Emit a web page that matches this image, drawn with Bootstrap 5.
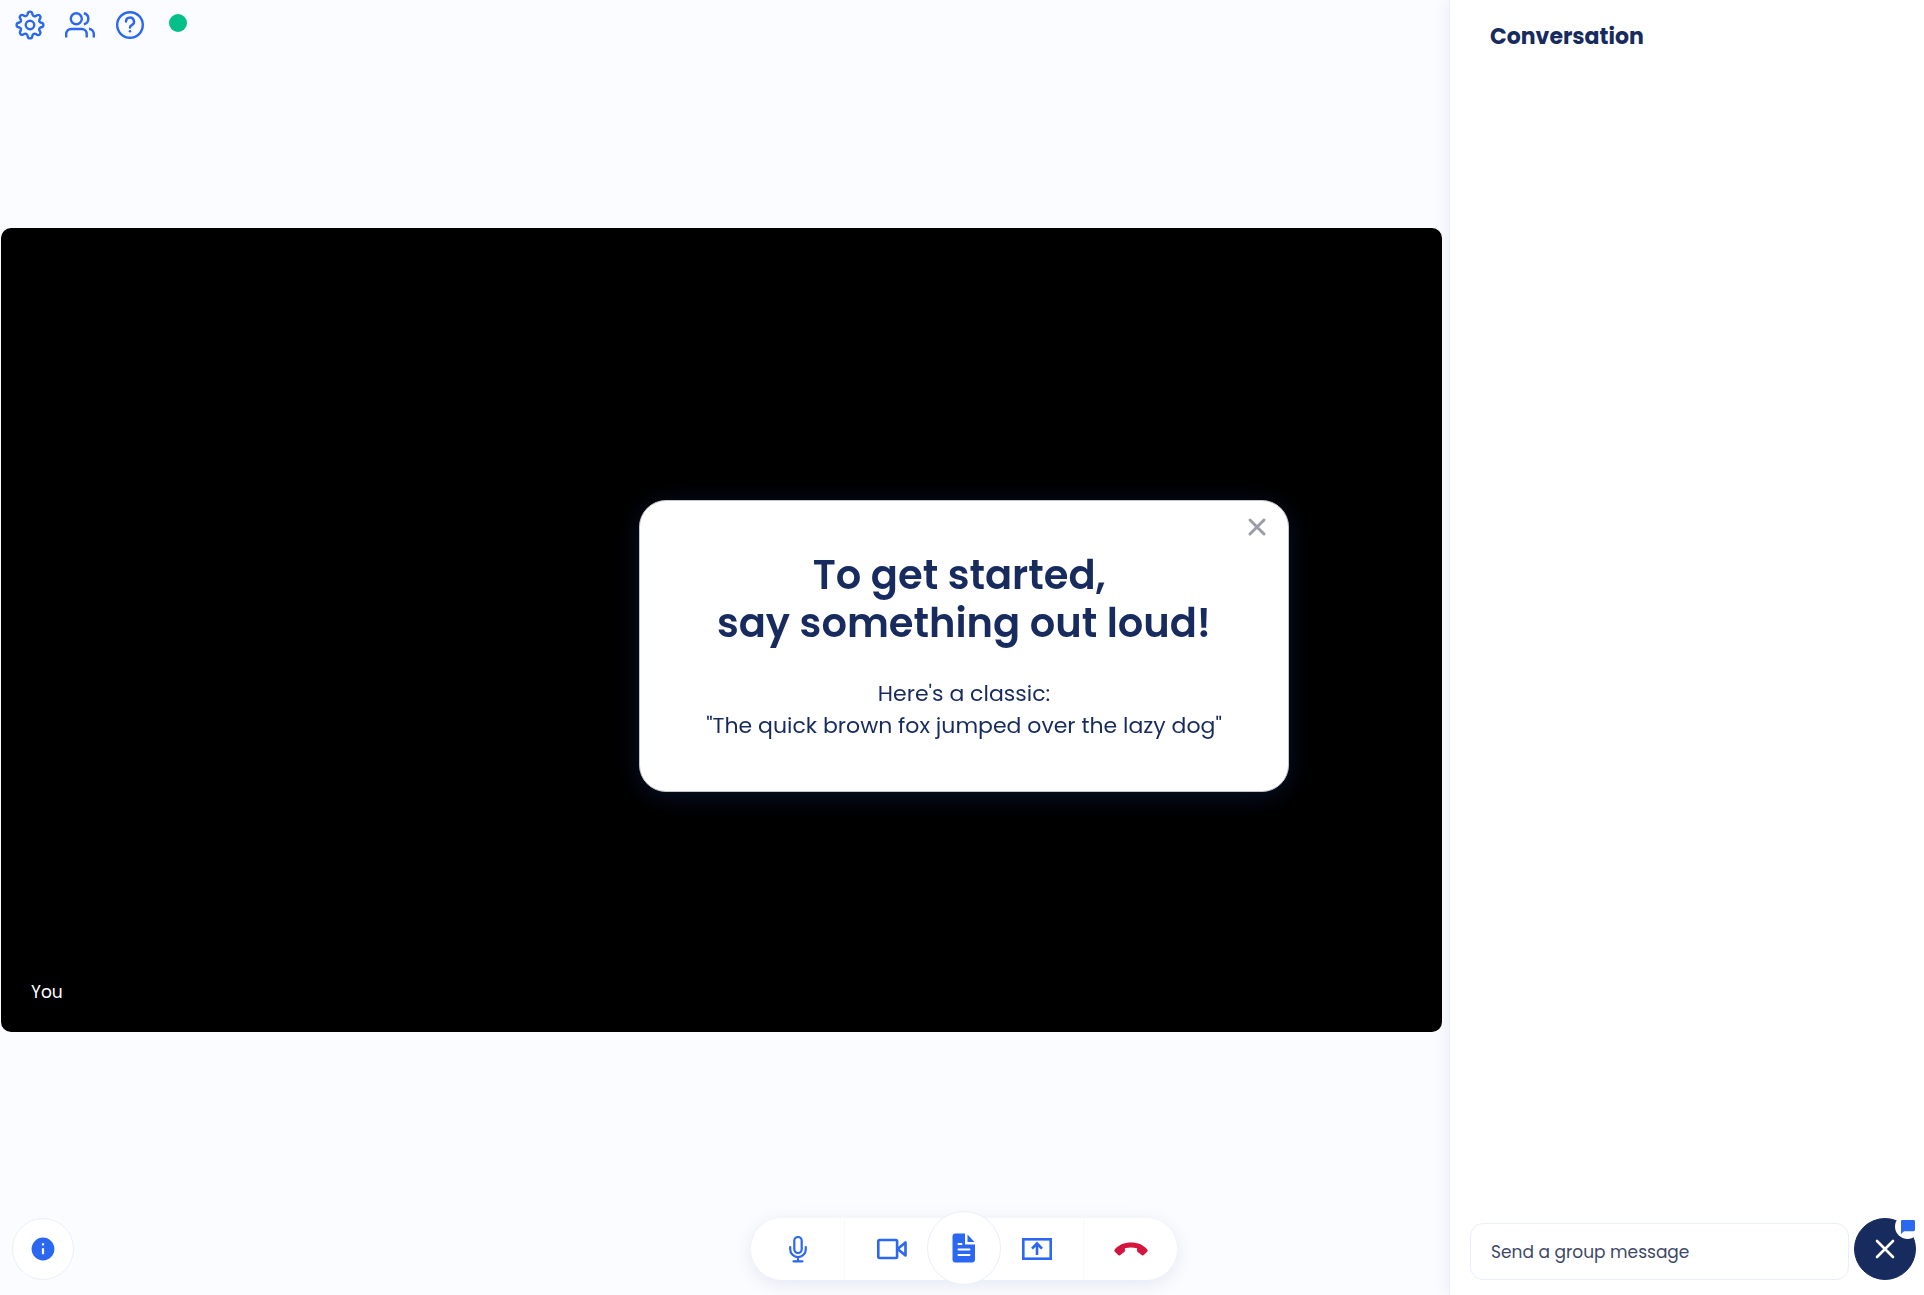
<!DOCTYPE html>
<html lang="en">
<head>
<meta charset="utf-8">
<meta name="viewport" content="width=device-width, initial-scale=1">
<title>Conversation</title>
<link rel="stylesheet" href="https://cdn.jsdelivr.net/npm/bootstrap@5.3.0/dist/css/bootstrap.min.css">
<style>
  :root { --ink: #172b5f; --accent: #2b67f0; --hairline: #e8effa; }
  body { font-family: Poppins, Inter, "Liberation Sans", sans-serif; color: var(--ink); background: #fbfcff; }
  svg { display: block; }
  .bare-btn { color: var(--accent); background: none; border: 0; padding: 0; }
  .topbar { height: 49px; padding: 10px 15px 9px; gap: 20px; }
  .status-dot { width: 18px; height: 18px; margin: 4px; background: #04bf8a; }
  .stage { padding: 0 7px 84px 1px; }
  .video-tile { aspect-ratio: 1441 / 804; border-radius: 10px; padding: 28px 30px; font-size: 17px; line-height: 24px; }
  .chat-panel { width: 475px; border-left: 1px solid var(--hairline); box-shadow: 0 0 16px rgba(30, 60, 130, .09); }
  .chat-title { font-size: 22px; line-height: 32px; font-weight: 700; padding: 21px 40px; }
  .chat-form { padding: 0 75px 15px 20px; }
  .chat-input { height: 57px; border: 1px solid var(--hairline); border-radius: 13px; padding: 9px 20px; font-size: 17px; line-height: 36px; color: var(--ink); }
  .chat-input::placeholder { color: #3d4967; opacity: 1; }
  .floating-bar { padding: 0 8px 15px 12px; pointer-events: none; }
  .floating-bar > * { pointer-events: auto; }
  .round-btn { width: 62px; height: 62px; border: 1px solid var(--hairline); color: var(--accent); }
  .close-chat { background: var(--ink); border-color: var(--ink); color: #fff; }
  .chat-badge { width: 25px; height: 25px; top: -5px; right: -5px; color: var(--accent); }
  .call-dock { height: 62px; box-shadow: 0 4px 18px rgba(30, 60, 130, .11); }
  .call-btn { width: 93px; }
  .call-btn.edge-start { width: 94px; border-right: 1px solid #f7f9fc; }
  .call-btn.edge-end { width: 94px; border-left: 1px solid #f7f9fc; color: #d5153f; }
  .notes-btn { width: 74px; height: 74px; margin: -7px -11px; border: 1px solid var(--hairline); background: #fff; z-index: 1; }
  .prompt-layer { padding: 0 0 4px 4px; pointer-events: none; }
  .prompt-card { width: 650px; padding: 50px 50px 49px; border: 1px solid #c3c5cb; border-radius: 27px; box-shadow: 0 4px 24px rgba(35, 70, 170, .25); pointer-events: auto; }
  .prompt-title { font-size: 40px; line-height: 48px; font-weight: 600; margin: 0 0 31px; }
  .prompt-text { font-size: 22px; line-height: 32px; }
  .prompt-close { top: 13px; right: 18px; color: #9a9da8; }
</style>
<script src="https://cdn.jsdelivr.net/npm/bootstrap@5.3.0/dist/js/bootstrap.bundle.min.js"></script>
</head>
<body>
<div class="d-flex vh-100 overflow-hidden">
  <main class="d-flex flex-column flex-grow-1">
    <header class="topbar d-flex">
      <button class="bare-btn" type="button" aria-label="Settings">
        <svg width="30" height="30" viewBox="0 0 24 24" fill="none" stroke="currentColor" stroke-width="1.9" stroke-linecap="round" stroke-linejoin="round"><circle cx="12" cy="12" r="3.400"/><path d="M10.200 2.700a1.850 1.850 0 0 1 3.600 0l.2.9a1.850 1.850 0 0 0 2.750 1.150l.8-.5a1.850 1.850 0 0 1 2.550 2.550l-.5.8A1.850 1.850 0 0 0 20.400 10l.9.2a1.850 1.850 0 0 1 0 3.600l-.9.2a1.850 1.850 0 0 0-.8 2.400l.5.8a1.850 1.850 0 0 1-2.550 2.550l-.8-.5A1.850 1.850 0 0 0 14 20.400l-.2.9a1.850 1.850 0 0 1-3.600 0l-.2-.9a1.850 1.850 0 0 0-2.750-1.150l-.8.5A1.850 1.850 0 0 1 4.100 17.200l.5-.8A1.850 1.850 0 0 0 3.600 14l-.9-.2a1.850 1.850 0 0 1 0-3.600l.9-.2a1.850 1.850 0 0 0 1-2.400l-.5-.8A1.850 1.850 0 0 1 6.650 4.250l.8.5A1.850 1.850 0 0 0 10 3.600z"/></svg>
      </button>
      <button class="bare-btn" type="button" aria-label="Participants">
        <svg width="30" height="30" viewBox="0 0 30 30" fill="none" stroke="currentColor" stroke-width="2.4"><circle cx="11.300" cy="8.700" r="5.500"/><path d="M1.200 27.500v-3.500a5 5 0 0 1 5-5h10.500a5 5 0 0 1 5 5v3.500M18.800 3.200a5.600 5.600 0 0 1 0 11M24 18.800a5.500 5.500 0 0 1 4.800 5.500v3.200"/></svg>
      </button>
      <button class="bare-btn" type="button" aria-label="Help">
        <svg width="30" height="30" viewBox="0 0 30 30" fill="none" stroke="currentColor" stroke-width="2.4" stroke-linecap="round"><circle cx="15" cy="15" r="12.800"/><path d="M11 11.500a4 4 0 1 1 5.800 3.600c-1.200.6-1.800 1.200-1.800 2.500"/><circle cx="15" cy="21.300" r="1.300" fill="currentColor" stroke="none"/></svg>
      </button>
      <span class="status-dot rounded-circle" role="status" aria-label="Connected"></span>
    </header>
    <section class="stage flex-grow-1 d-flex align-items-center">
      <div class="video-tile bg-black text-white flex-grow-1 d-flex align-items-end"><span>You</span></div>
    </section>
  </main>
  <aside class="chat-panel bg-white d-flex flex-column flex-shrink-0">
    <h2 class="chat-title m-0">Conversation</h2>
    <div class="flex-grow-1"></div>
    <form class="chat-form">
      <label class="visually-hidden" for="message">Group message</label>
      <input class="chat-input w-100 bg-white" id="message" type="text" placeholder="Send a group message">
    </form>
  </aside>
</div>

<div class="floating-bar fixed-bottom d-flex justify-content-between align-items-end">
  <button class="round-btn rounded-circle bg-white p-0 d-flex align-items-center justify-content-center" type="button" aria-label="Call information">
    <svg width="24" height="24" viewBox="0 0 24 24"><circle cx="12" cy="12" r="11.400" fill="currentColor"/><path d="M12 11.200v6" stroke="#fff" stroke-width="2.200"/><path d="M12 6.200v2.200" stroke="#fff" stroke-width="2.200"/></svg>
  </button>

  <div class="call-dock bg-white rounded-pill d-flex" role="toolbar" aria-label="Call controls">
    <button class="bare-btn call-btn edge-start d-flex align-items-center justify-content-center" type="button" aria-label="Microphone">
      <svg width="20" height="28" viewBox="0 0 20 28" fill="none" stroke="currentColor" stroke-width="2.200" stroke-linecap="round"><rect x="6.300" y="2" width="7.400" height="16" rx="3.700"/><path d="M2.200 12v2.300a7.800 7.800 0 0 0 15.600 0V12M10 22v4M5.500 26.300h9"/></svg>
    </button>
    <button class="bare-btn call-btn d-flex align-items-center justify-content-center" type="button" aria-label="Camera">
      <svg width="30" height="22" viewBox="0 0 30 22" fill="none" stroke="currentColor" stroke-width="2.600" stroke-linejoin="round"><rect x="1.300" y="2" width="18.800" height="18" rx="1.200"/><path d="M20.600 11l7.900-6.500v13z"/></svg>
    </button>
    <button class="bare-btn notes-btn rounded-circle d-flex align-items-center justify-content-center" type="button" aria-label="Transcript">
      <svg width="24" height="30" viewBox="0 0 24 30"><path fill="currentColor" d="M3.500.5H13v11h10v15a3 3 0 0 1-3 3H3.500a3 3 0 0 1-3-3v-23a3 3 0 0 1 3-3zM15.500 1.500l7 7.500h-7z"/><path stroke="#fff" stroke-width="2" stroke-linecap="round" d="M6.500 11h3M6.500 16.500h11M6.500 22h11"/></svg>
    </button>
    <button class="bare-btn call-btn d-flex align-items-center justify-content-center" type="button" aria-label="Share screen">
      <svg width="30" height="22" viewBox="0 0 30 22" fill="none" stroke="currentColor" stroke-width="2.600"><rect x="1.300" y="1.300" width="27.400" height="19.400"/><path d="M15 17V6M10 10.700l5-5.200 5 5.200"/></svg>
    </button>
    <button class="bare-btn call-btn edge-end d-flex align-items-center justify-content-center" type="button" aria-label="Hang up">
      <svg width="34" height="14" viewBox="0 0 34 14" fill="currentColor"><path d="M.6 7.800C4 3 10.200.5 17 .5s13 2.500 16.400 7.300c.4.600.4 1.200 0 1.700l-3.600 3.600c-.5.500-1.200.5-1.800.1l-4-2.900c-.6-.4-.9-.9-.9-1.600V6.200c-4-1-8.200-1-12.200 0v2.500c0 .7-.3 1.200-.9 1.600l-4 2.900c-.6.400-1.300.4-1.800-.1L.6 9.500c-.4-.5-.4-1.100 0-1.700z"/></svg>
    </button>
  </div>

  <button class="round-btn close-chat position-relative rounded-circle p-0 d-flex align-items-center justify-content-center" type="button" aria-label="Close chat">
    <svg width="20" height="20" viewBox="0 0 20 20" stroke="currentColor" stroke-width="2.600" stroke-linecap="round"><path d="M2 2l16 16M18 2L2 18"/></svg>
    <span class="chat-badge position-absolute bg-white rounded-circle d-flex align-items-center justify-content-center">
      <svg width="14" height="14" viewBox="0 0 14 14" fill="currentColor"><path d="M1.400 0h11.200A1.400 1.400 0 0 1 14 1.400v8.400a1.400 1.400 0 0 1-1.400 1.400H3L0 14V1.400A1.400 1.400 0 0 1 1.400 0z"/></svg>
    </span>
  </button>
</div>

<div class="prompt-layer position-fixed top-0 bottom-0 start-0 end-0 d-flex align-items-center justify-content-center">
  <section class="prompt-card bg-white position-relative text-center" role="dialog" aria-labelledby="prompt-title">
    <button class="bare-btn prompt-close position-absolute" type="button" aria-label="Close">
      <svg width="26" height="26" viewBox="0 0 26 26" stroke="currentColor" stroke-width="3" stroke-linecap="round"><path d="M6 6l14 14M20 6L6 20"/></svg>
    </button>
    <h1 class="prompt-title" id="prompt-title">To get started,&nbsp;<br>say something out loud!</h1>
    <p class="prompt-text m-0">Here's a classic:<br><span class="text-nowrap">"The quick brown fox jumped over the lazy dog"</span></p>
  </section>
</div>
</body>
</html>
